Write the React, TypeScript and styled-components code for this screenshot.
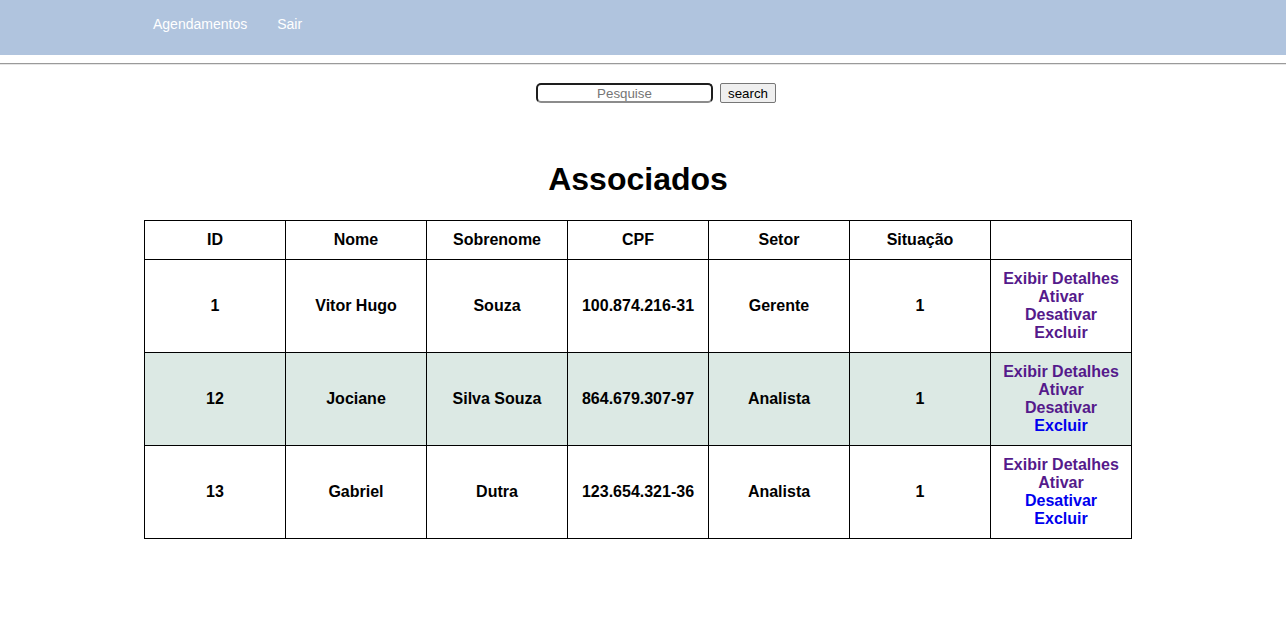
import React from "react";
import styled, { createGlobalStyle } from "styled-components";

const GlobalStyle = createGlobalStyle`
  html, body { margin: 0; padding: 0; background: #ffffff; }
  body { font-family: "Liberation Sans", Arial, sans-serif; color: #000; }
`;

const NavBar = styled.nav`
  display: flex;
  align-items: flex-start;
  height: 55px;
  box-sizing: border-box;
  padding: 16px 0 0 138px;
  background: #b0c4de;
`;

const NavLink = styled.a`
  padding: 0 15px;
  font-size: 14px;
  line-height: 16px;
  color: #ffffff;
  text-decoration: none;
`;

const Rule = styled.hr`
  margin: 8px 0 0;
  border: none;
  border-top: 1px solid #9a9a9a;
  border-bottom: 1px solid #e6e6e6;
`;

const SearchForm = styled.form`
  display: flex;
  justify-content: center;
  align-items: center;
  gap: 7px;
  margin: 18px 0 0;
  padding-left: 26px;
`;

const SearchInput = styled.input`
  box-sizing: border-box;
  width: 177px;
  height: 20px;
  padding: 0 4px;
  border: 2px solid #1e1e1e;
  border-bottom-color: #8c8c8c;
  border-radius: 5px;
  font-family: "Liberation Sans", Arial, sans-serif;
  font-size: 13.33px;
  text-align: center;
  outline: none;
  &::placeholder { color: #757575; }
`;

const SearchButton = styled.button`
  box-sizing: border-box;
  height: 20px;
  width: 56px;
  padding: 1px 6px 0;
  border: 1px solid #767676;
  border-radius: 2px;
  background: #efefef;
  color: #000;
  font-family: "Liberation Sans", Arial, sans-serif;
  font-size: 13.33px;
  line-height: 16px;
`;

const Main = styled.main`
  width: 988px;
  margin: 58px 0 0 144px;
`;

const Title = styled.h1`
  margin: 0 0 22px;
  text-align: center;
  font-size: 32px;
  line-height: 37px;
  font-weight: bold;
`;

const Table = styled.table`
  width: 988px;
  border-collapse: collapse;
  table-layout: fixed;
`;

const HeadCell = styled.th`
  border: 1px solid #000;
  padding: 10px;
  font-size: 16px;
  line-height: 18px;
  font-weight: bold;
  text-align: center;
  height: 18px;
`;

const Row = styled.tr<{ $shade?: boolean }>`
  background: ${(p) => (p.$shade ? "#dce9e4" : "transparent")};
`;

const Cell = styled.td`
  border: 1px solid #000;
  padding: 10px;
  font-size: 16px;
  line-height: 18px;
  font-weight: bold;
  text-align: center;
  vertical-align: middle;
`;

const ActionLink = styled.a<{ $visited?: boolean }>`
  display: block;
  color: ${(p) => (p.$visited ? "#551a8b" : "#0000ee")};
  text-decoration: none;
  font-weight: bold;
`;

type Member = {
  id: number;
  nome: string;
  sobrenome: string;
  cpf: string;
  setor: string;
  situacao: number;
  visited: boolean[];
};

const members: Member[] = [
  { id: 1, nome: "Vitor Hugo", sobrenome: "Souza", cpf: "100.874.216-31", setor: "Gerente", situacao: 1, visited: [true, true, true, true] },
  { id: 12, nome: "Jociane", sobrenome: "Silva Souza", cpf: "864.679.307-97", setor: "Analista", situacao: 1, visited: [true, true, true, false] },
  { id: 13, nome: "Gabriel", sobrenome: "Dutra", cpf: "123.654.321-36", setor: "Analista", situacao: 1, visited: [true, true, false, false] },
];

const actions = ["Exibir Detalhes", "Ativar", "Desativar", "Excluir"];
const headers = ["ID", "Nome", "Sobrenome", "CPF", "Setor", "Situação", ""];

export default function App() {
  return (
    <>
      <GlobalStyle />
      <NavBar>
        <NavLink href="#">Agendamentos</NavLink>
        <NavLink href="#">Sair</NavLink>
      </NavBar>
      <Rule />
      <SearchForm onSubmit={(e) => e.preventDefault()}>
        <SearchInput placeholder="Pesquise" />
        <SearchButton type="submit">search</SearchButton>
      </SearchForm>
      <Main>
        <Title>Associados</Title>
        <Table>
          <thead>
            <tr>
              {headers.map((h, i) => (
                <HeadCell key={i}>{h}</HeadCell>
              ))}
            </tr>
          </thead>
          <tbody>
            {members.map((m, idx) => (
              <Row key={m.id} $shade={idx === 1}>
                <Cell>{m.id}</Cell>
                <Cell>{m.nome}</Cell>
                <Cell>{m.sobrenome}</Cell>
                <Cell>{m.cpf}</Cell>
                <Cell>{m.setor}</Cell>
                <Cell>{m.situacao}</Cell>
                <Cell>
                  {actions.map((a, i) => (
                    <ActionLink key={a} href="#" $visited={m.visited[i]}>
                      {a}
                    </ActionLink>
                  ))}
                </Cell>
              </Row>
            ))}
          </tbody>
        </Table>
      </Main>
    </>
  );
}
